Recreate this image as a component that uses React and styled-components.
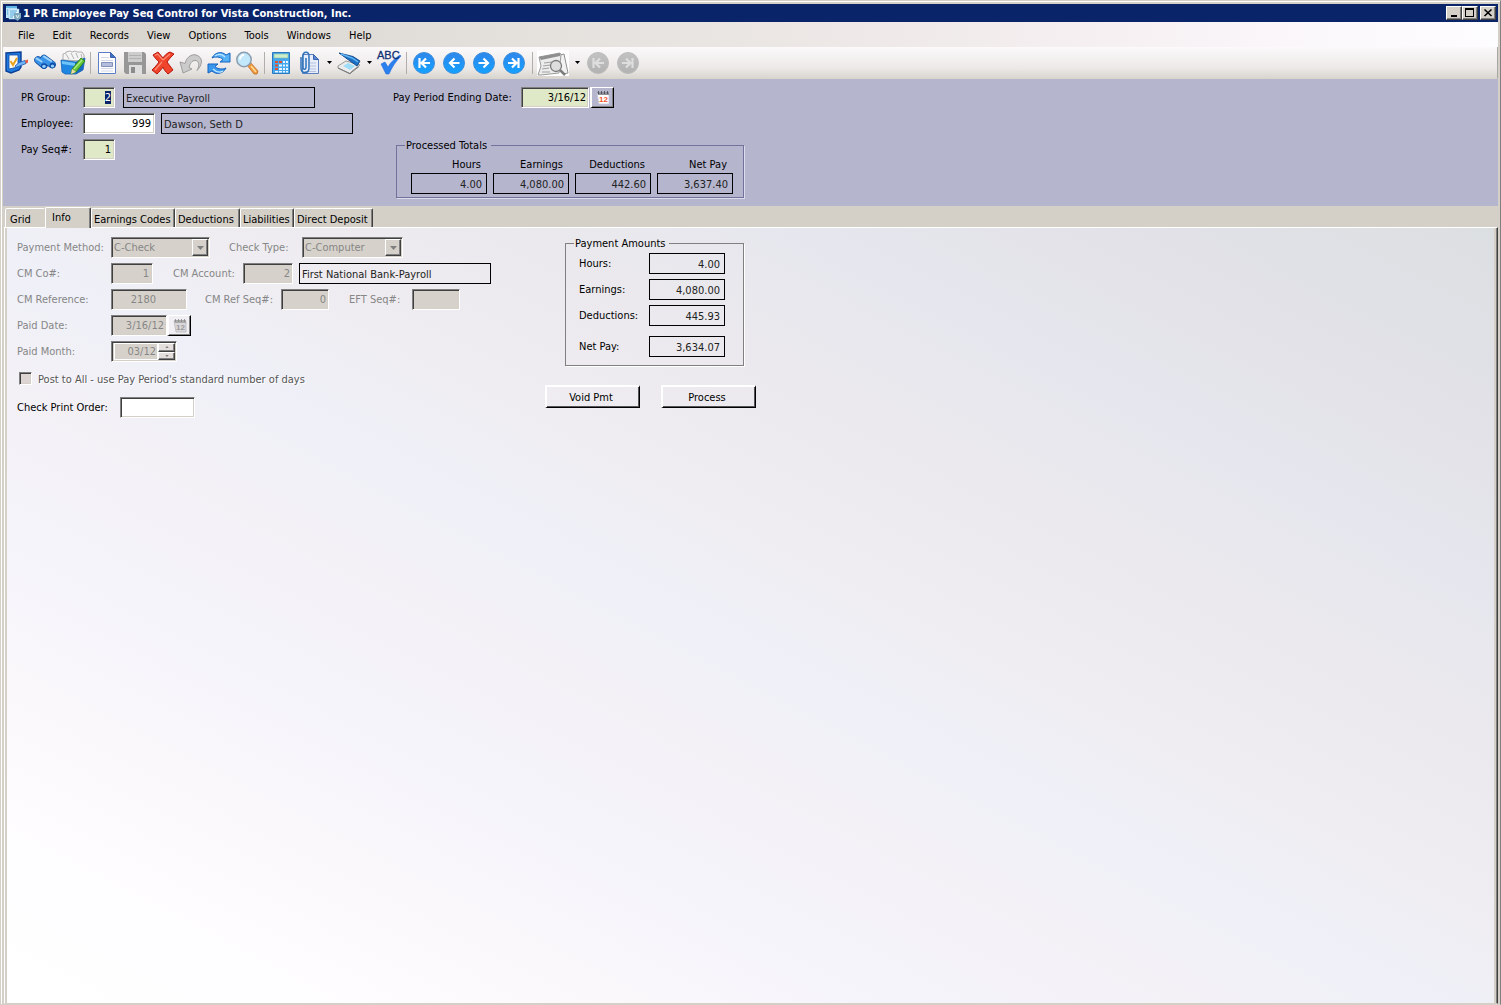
import React, { useEffect, useRef } from 'react'
import styled, { createGlobalStyle, css } from 'styled-components'

const GlobalStyle = createGlobalStyle`
  * { box-sizing: border-box; }
  body {
    margin: 0;
    background: #d4d0c8;
    color: #000;
  }
  body, input, select, button {
    font-family: "DejaVu Sans Condensed", "DejaVu Sans", Tahoma, sans-serif;
    font-size: 11px;
    line-height: 14px;
  }
`

const raised = css`
  border: 1px solid;
  border-color: #fff #404040 #404040 #fff;
  box-shadow: inset -1px -1px 0 #808080;
`

const sunken = css`
  border: 1px solid;
  border-color: #808080 #fff #fff #808080;
  box-shadow: inset 1px 1px 0 #404040, inset -1px -1px 0 #d4d0c8;
`

/* window frame */

const Window = styled.div`
  display: flex;
  flex-direction: column;
  min-height: 100vh;
  padding: 2px 2px 0;
  background: #d4d0c8;
  border: 1px solid;
  border-color: #d4d0c8 #808080 #d4d0c8 #d4d0c8;
  box-shadow: inset 1px 1px 0 #fff;
`

const TitleBar = styled.header`
  display: flex;
  align-items: center;
  height: 18px;
  margin-top: 1px;
  padding: 0 2px 0 3px;
  background: #0a246a;
  color: #fff;
`

const Title = styled.h1`
  flex: 1;
  margin: 0 0 0 2px;
  padding-top: 1px;
  font-size: 11px;
  font-weight: bold;
`

const CaptionButtons = styled.div`
  display: flex;
`

const CaptionButton = styled.button`
  ${raised}
  display: flex;
  width: 16px;
  height: 14px;
  margin-left: ${(p) => (p.$apart ? '2px' : '0')};
  padding: 1px 2px;
  background: #d4d0c8;
`

/* menu and toolbar */

const MenuBar = styled.nav`
  display: flex;
  align-items: center;
  gap: 18px;
  height: 25px;
  padding: 2px 15px 0;
  background: linear-gradient(to right, #d6d2cb, #e9e5e2 47%, #f6f0f2 75%, #fbf8fb 88%, #fdfcfe);
`

const MenuItem = styled.button`
  padding: 0;
  border: 0;
  background: none;
  color: #000;
`

const ToolBar = styled.div`
  display: flex;
  align-items: center;
  height: 32px;
  border-bottom: 1px solid #d9d4cc;
  border-right: 1px solid #a9a5a2;
  background: linear-gradient(#fbf9fa, #f1eded 50%, #ece8e6 70%, #d9d5cf);
`

const ToolButton = styled.button`
  display: flex;
  align-items: center;
  justify-content: center;
  width: ${(p) => p.$width || 28}px;
  height: 28px;
  padding: 0;
  border: 0;
  background: none;
`

const Separator = styled.span`
  width: 6px;
  height: 22px;
  background: linear-gradient(#b0adab, #b0adab) center / 1px 100% no-repeat;
`

const PreviewTile = styled.span`
  display: flex;
  justify-content: center;
  width: 32px;
  height: 26px;
  background: #fff;
`

/* fields */

const Row = styled.div`
  display: flex;
  align-items: center;
  min-height: 21px;
`

const Label = styled.label`
  flex: none;
  width: ${(p) => p.$width}px;
  margin-left: ${(p) => p.$gap || 0}px;
  padding-top: 1px;
  color: ${(p) => (p.$dim ? '#868686' : '#000')};
  white-space: nowrap;
`

const Field = styled.input`
  ${sunken}
  width: ${(p) => p.$width}px;
  height: 21px;
  padding: 0 ${(p) => p.$inset || 3}px 0 3px;
  border-radius: 0;
  outline: none;
  background: ${(p) => (p.$key ? '#dfe8c7' : '#fff')};
  color: #000;
  text-align: right;

  &:disabled {
    background: #d6d2cb;
    color: #868686;
  }
  &::selection {
    background: #0a246a;
    color: #fff;
  }
`

const Display = styled.input`
  width: ${(p) => p.$width || 76}px;
  height: 21px;
  margin-left: ${(p) => p.$gap || 0}px;
  padding: 1px ${(p) => (p.$text ? 2 : 4)}px 0;
  border: 1px solid #000;
  border-radius: 0;
  outline: none;
  background: transparent;
  color: #222;
  text-align: ${(p) => (p.$text ? 'left' : 'right')};
`

const DateButton = styled.button`
  ${raised}
  display: flex;
  align-items: center;
  justify-content: center;
  width: 24px;
  height: 21px;
  margin-left: ${(p) => p.$gap || 0}px;
  padding: 0;
  border-width: 1px 1px 1px 2px;
  border-color: #fff #000 #000 #fff;
  background: ${(p) => (p.disabled ? '#f1eff4' : '#b5b5ce')};
`

const ComboFrame = styled.div`
  ${sunken}
  display: flex;
  width: ${(p) => p.$width}px;
  height: 21px;
  padding: 1px;
  background: #d6d2cb;
`

const Select = styled.select`
  flex: 1;
  min-width: 0;
  padding: 1px 1px 0;
  border: 0;
  appearance: none;
  background: transparent;
  color: #868686;
  opacity: 1;
`

const ComboArrow = styled.span`
  ${raised}
  display: flex;
  align-items: center;
  justify-content: center;
  width: 16px;
`

const SpinFrame = styled.div`
  ${sunken}
  display: flex;
  width: 66px;
  height: 21px;
  padding: 1px 1px 1px 2px;
  background: #d6d2cb;
`

const SpinInput = styled.input`
  flex: 1;
  min-width: 0;
  padding: 1px 1px 0 0;
  border: 1px solid #fff;
  background: transparent;
  color: #868686;
  text-align: right;
`

const SpinButtons = styled.div`
  display: grid;
  grid-template-rows: 1fr 1fr;
  width: 17px;
`

const SpinButton = styled.button`
  ${raised}
  display: flex;
  align-items: center;
  justify-content: center;
  min-height: 0;
  padding: 0;
  background: #e4dedd;
`

const Group = styled.fieldset`
  width: ${(p) => p.$width}px;
  min-width: 0;
  margin: ${(p) => p.$margin};
  padding: ${(p) => p.$padding};
  border: 1px solid ${(p) => p.$line || '#808080'};
  box-shadow: 1px 1px 0 ${(p) => p.$light || '#fff'};
`

const Legend = styled.legend`
  height: 14px;
  margin-left: ${(p) => p.$gap}px;
  padding: 0 4px 0 1px;
  line-height: 16px;
`

/* record header */

const KeyPanel = styled.section`
  display: flex;
  padding: 8px 18px;
  background: #b5b5ce;
`

const Stack = styled.div`
  display: flex;
  flex-direction: column;
  gap: 5px;
  width: ${(p) => p.$width}px;
`

const Totals = styled.div`
  display: grid;
  grid-template-columns: repeat(4, 76px);
  gap: 1px 6px;
`

const TotalLabel = styled.label`
  padding-right: 6px;
  text-align: right;
`

/* tabs */

const TabStrip = styled.div`
  display: flex;
  align-items: flex-end;
  height: 21px;
  padding-left: 2px;
`

const Tab = styled.button`
  width: ${(p) => p.$width}px;
  height: 19px;
  padding: 3px 0 0 ${(p) => (p.$wide ? 5 : 2)}px;
  border: 1px solid;
  border-color: #fff #404040 transparent #fff;
  border-bottom: 0;
  border-radius: 2px 2px 0 0;
  box-shadow: inset -1px 0 0 #808080;
  background: #d4d0c8;
  color: #000;
  text-align: left;
  white-space: nowrap;

  ${(p) => p.$first && css`
    padding-left: 4px;
    border-right-color: transparent;
    box-shadow: none;
  `}
  ${(p) => p.$active && css`
    position: relative;
    height: 21px;
    margin-bottom: -1px;
    padding: 0 0 1px 6px;
  `}
`

const PageFrame = styled.div`
  display: flex;
  flex: 1;
  margin-left: 1px;
  padding-right: 1px;
  border: 1px solid;
  border-color: #fff #404040 #d4d0c8 #fff;
  box-shadow: inset -1px 0 0 #808080;
`

const TabPage = styled.main`
  display: flex;
  flex: 1;
  padding: 9px 10px;
  border: solid #d4d0c8;
  border-width: 0 2px;
  background: linear-gradient(
    to bottom left,
    #dcdfe2,
    #e2e2e8 14%,
    #e6e7ee 24%,
    #ebe9ed 34%,
    #efedf1 44%,
    #eff0f8 52%,
    #f3f1f6 60%,
    #f5f4fb 70%,
    #fbf8fb 80%,
    #fefdff 90%,
    #fff
  );
  background-clip: padding-box;
`

const CheckRow = styled.div`
  display: flex;
  align-items: center;
  gap: 6px;
  height: 16px;
  margin: 5px 0 4px;
  padding-left: 2px;
`

const CheckBox = styled.input`
  ${sunken}
  appearance: none;
  width: 13px;
  height: 13px;
  margin: 0 0 3px;
  background: #dcd5d3;
`

const CheckLabel = styled.label`
  color: #555;
  text-shadow: 1px 1px 0 #fff;
`

const NetPay = styled.div`
  margin-top: 5px;
`

const Actions = styled.div`
  display: flex;
  gap: 21px;
  margin-top: 19px;
`

const PushButton = styled.button`
  width: 95px;
  height: 23px;
  padding: 1px 4px 0 0;
  border: solid;
  border-width: 2px 1px 1px 2px;
  border-color: #fff #000 #000 #fff;
  box-shadow: inset -1px -1px 0 #55555a;
  background: transparent;
  color: #000;
`

/* icons */

const Icon = ({ children }) => (
  <svg width="24" height="24" viewBox="0 0 24 24" aria-hidden="true">
    {children}
  </svg>
)

const Caret = () => (
  <svg width="5" height="3" viewBox="0 0 5 3" aria-hidden="true">
    <path d="M0 0h5L2.500 3z" fill="#000" />
  </svg>
)

const AppIcon = () => (
  <svg width="15" height="16" viewBox="0 0 15 16" aria-hidden="true">
    <path d="M0 1h11v12H0z" fill="#bfe6fa" />
    <path d="M0 1h11v2H0z" fill="#5fb4e4" />
    <path d="M3 4h10v10H3z" fill="#e9f7ff" stroke="#8cc4e6" strokeWidth=".6" />
    <path d="M4 6h7M4 8h6M4 10h4M4 12h3M1 5h1M1 7h1M1 9h1" stroke="#3f9fd8" />
    <path d="M8 8h7v5l-3.500 3L8 13z" fill="#7da7bd" />
    <path d="M10 10l1.500 3L13 10" fill="none" stroke="#e6f2f8" />
  </svg>
)

const CloseFormIcon = () => (
  <Icon>
    <path d="M1 2l15-1v15l-2 3-8 3-5-2z" fill="#1f7be0" stroke="#0b3f94" strokeWidth="1.400" />
    <path d="M4 4h9v12l-9 2z" fill="#fffdf2" stroke="#0f4aa6" strokeWidth=".8" />
    <path d="M5.500 10l2.500 4 4-7" fill="none" stroke="#e8a21c" strokeWidth="2" />
    <path d="M10 15l4-3.500 6-2 1 3-5 2-5 2z" fill="#6fb4f6" stroke="#1658b4" strokeWidth=".8" />
    <path d="M20 9.500l3-1v3l-2 1z" fill="#ee5a3c" />
  </Icon>
)

const BinocularsIcon = () => (
  <Icon>
    <path d="M5 9l6 5M11 7.500l8 6" stroke="#14509f" strokeWidth="7.500" strokeLinecap="round" />
    <path d="M5 9l6 5M11 7.500l8 6" stroke="#3a93e6" strokeWidth="6" strokeLinecap="round" />
    <path d="M3.500 7.500l5 3M11 5.500l7 4.500" stroke="#9fd4fb" strokeWidth="2" strokeLinecap="round" />
    <ellipse cx="11" cy="15" rx="3" ry="2.800" fill="#0f4aa6" />
    <ellipse cx="11" cy="15.300" rx="1.800" ry="1.600" fill="#8fd0ff" />
    <ellipse cx="19.500" cy="14.500" rx="3" ry="2.800" fill="#0f4aa6" />
    <ellipse cx="19.500" cy="15" rx="1.800" ry="1.600" fill="#8fd0ff" />
  </Icon>
)

const FileBoxIcon = () => (
  <svg width="26" height="26" viewBox="0 0 26 26" aria-hidden="true">
    <path d="M3 10V4l3-1V2l4-1 2 1 3-1 2 1 5 0 2 3v6z" fill="#f4f4f4" stroke="#a0a0a0" strokeWidth=".8" />
    <path d="M6 4l3 5M11 3l3 6M16 3l2 5M21 4l1 4" stroke="#ababab" strokeWidth=".9" />
    <path d="M1 10l15 2v12l-11 0-3-2z" fill="#1f86e2" stroke="#1463b8" strokeWidth=".8" />
    <path d="M16 12l9-4-2 12-7 4z" fill="#1568c4" stroke="#1463b8" strokeWidth=".8" />
    <path d="M2 11l13 2v3L2 14z" fill="#6cc4fa" />
    <path d="M21 8l4 3-9 11-5 2 1-5z" fill="#63c636" stroke="#2f7d14" strokeWidth=".8" />
    <path d="M22 10l-8 9" stroke="#b4ec8c" strokeWidth="1.200" />
    <path d="M12 19l4 3-5 2z" fill="#f3d7a4" />
  </svg>
)

const NewIcon = () => (
  <Icon>
    <path d="M3.500 1.500h12l5 5v16h-17z" fill="#fdfdff" stroke="#5b7fc4" />
    <path d="M15.500 1.500v5h5z" fill="#3f6fc6" stroke="#3b62ae" />
    <path d="M6 6.500h8M6 9.500h12M6 17.500h12M6 20h12" stroke="#d4d7e6" />
    <path d="M6.500 11.500h11v4h-11z" fill="#b4bedc" stroke="#8190bc" />
  </Icon>
)

const SaveIcon = () => (
  <Icon>
    <path d="M1 1h20l2 2v20H3l-2-2z" fill="#979797" />
    <path d="M5 1h14v10H5z" fill="#cdcdcd" />
    <path d="M6 4.500h12M6 7.500h12" stroke="#b0b0b0" />
    <path d="M6 14h13v9H6z" fill="#dedede" />
    <path d="M8 16h4v6H8z" fill="#8b8b8b" />
  </Icon>
)

const DeleteIcon = () => (
  <Icon>
    <path
      d="M2 4l5-3c2 2 3 4 5 6 2-3 4-5 7-6l4 2c-3 3-5 5-7 8 2 3 4 5 6 8l-5 4c-2-2-4-4-5-7-2 3-4 5-6 7l-5-4c3-3 5-5 7-8-2-2-4-4-6-7z"
      fill="#f0452c"
      stroke="#b5170c"
    />
    <path d="M4 4.500l2.500-1.500L12 9l7-6M4 19l7-8" fill="none" stroke="#ff8d74" strokeWidth="1.200" />
  </Icon>
)

const UndoIcon = () => (
  <Icon>
    <path
      d="M1 11l3 11 9-4-3-1.500c1-4 3-7 6-7 4 0 5 4 2 10 5-5 6-11 2-14-5-4-12-1-14 7z"
      fill="#cbcbcb"
      stroke="#9d9d9d"
    />
  </Icon>
)

const RefreshIcon = () => (
  <Icon>
    <path d="M5 7c3-6 10-7 14-3l4-2v9H13l3-2.500c-3-3-8-3-11-1.500z" fill="#55b1f6" stroke="#1763bd" strokeWidth="1" />
    <path d="M19 17c-3 6-10 7-14 3l-4 2v-9h10l-3 2.500c3 3 8 3 11 1.500z" fill="#3a98ec" stroke="#1763bd" strokeWidth="1" />
    <path d="M8 5c3-2 7-2 10 1M16 20c-3 2-7 1-10-2" fill="none" stroke="#c4e8ff" strokeWidth="1.200" />
  </Icon>
)

const SearchIcon = () => (
  <Icon>
    <path d="M12 14l3-3 8 9-1 3h-3z" fill="#f0963a" stroke="#c2702a" strokeWidth=".8" />
    <path d="M16 15l5 6" stroke="#ffdf9c" strokeWidth="1.500" />
    <circle cx="9" cy="8.500" r="7.200" fill="#c2e8fb" stroke="#8d9dae" strokeWidth="1.500" />
    <path d="M5 8.500c0-3 2-4.500 4-4.500" fill="none" stroke="#fff" strokeWidth="2" />
  </Icon>
)

const CalculatorIcon = () => (
  <Icon>
    <path d="M3.500 1.500h17v21h-17z" fill="#45a8ee" stroke="#2a78c0" />
    <path d="M5 3h14v4H5z" fill="#cdeecb" stroke="#86b7a0" strokeWidth=".6" />
    <path d="M6 10h3v2H6zM6 13.500h3v2H6zM6 17h3v2H6z" fill="#e2512f" />
    <path d="M10 10h3v2h-3z" fill="#e2512f" />
    <path d="M10 13.500h3v2h-3zM10 17h3v2h-3zM6 20h3v1.500H6zM10 20h3v1.500h-3zM14 10h2v2h-2zM14 13.500h2v2h-2zM14 17h2v2h-2zM14 20h2v1.500h-2zM17 10h2v2h-2zM17 13.500h2v2h-2zM17 17h2v2h-2zM17 20h2v1.500h-2z" fill="#e9f6ff" />
  </Icon>
)

const AttachIcon = () => (
  <Icon>
    <path d="M5.500 3.500h11l5 5v14h-16z" fill="#e8edfb" stroke="#5b80c2" />
    <path d="M16.500 3.500v5h5z" fill="#5b8bd6" stroke="#3b66ae" />
    <path d="M13 12h6M13 15h6M13 18h6M8 20.500h11" stroke="#b4bfdc" />
    <path d="M4 6v11c0 6 8 6 8 0V5c0-5-6-5-6 0v11c0 3 3 3 3 0V7" fill="none" stroke="#2f74bc" strokeWidth="1.500" />
  </Icon>
)

const ScannerIcon = () => (
  <Icon>
    <path d="M1 15l8-5 14 4-8 6-2 3L1 17z" fill="#ececec" stroke="#8f8f8f" strokeWidth=".9" />
    <path d="M6 15l5-3 7 3-5 4z" fill="#9fdcf8" />
    <path d="M1 17l12 5.500 9-7" fill="none" stroke="#777" />
    <path d="M2 2l14 3.500 7 4.500-3 5z" fill="#1c6fc4" stroke="#0f4688" strokeWidth=".9" />
    <path d="M4 3l11 4 6 4" fill="none" stroke="#62b4f2" strokeWidth="1.500" />
  </Icon>
)

const SpellIcon = () => (
  <svg width="26" height="26" viewBox="0 0 26 26" aria-hidden="true">
    <path d="M5 14l4-2 3 5C14 13 18 9 24 5l1 1c-5 5-9 11-12 18h-3z" fill="#2a80ee" stroke="#2a6cd8" strokeWidth=".6" />
    <text x="1" y="9" fontSize="11" fontFamily="Liberation Sans, sans-serif" fill="#0f2f74" stroke="#0f2f74" strokeWidth=".3">ABC</text>
  </svg>
)

const arrows = {
  first: 'M6.500 6v10M17 11H9.500M13 6.500L8.500 11l4.500 4.500',
  prev: 'M16.500 11H7M11.500 6.500L7 11l4.500 4.500',
  next: 'M5.500 11H15M10.500 6.500L15 11l-4.500 4.500',
  last: 'M15.500 6v10M5 11h7.500M9 6.500l4.500 4.500L9 15.500',
}

const NavIcon = ({ to, off }) => (
  <svg width="22" height="22" viewBox="0 0 22 22" aria-hidden="true">
    <defs>
      <linearGradient id={`nav-${to}-${off ? 'off' : 'on'}`} x1="0" y1="0" x2="0" y2="1">
        <stop offset="0" stopColor={off ? '#c2c2c2' : '#2f86ea'} />
        <stop offset="1" stopColor={off ? '#b2b2b2' : '#14a2ff'} />
      </linearGradient>
    </defs>
    <circle cx="11" cy="11" r="10.500" fill={`url(#nav-${to}-${off ? 'off' : 'on'})`} stroke={off ? '#bcbcbc' : '#3c8fdc'} />
    <path d={arrows[to]} fill="none" stroke={off ? '#dedede' : '#fff'} strokeWidth="2.200" />
  </svg>
)

const PreviewIcon = () => (
  <svg width="32" height="26" viewBox="0 0 32 26" aria-hidden="true">
    <path d="M23 5l4-1 4 19-5 1" fill="#f2f2f2" stroke="#8f8f8f" />
    <path d="M2 7l21-4 1 2-2 18-18 2-3 0 3-9z" fill="#ececec" stroke="#9a9a9a" />
    <path d="M2 7l21-4v3L4 10z" fill="#8f8f8f" />
    <path d="M7 13l8-1M6 16l7-1M5 19l7-1M5 22h8" stroke="#a0a0a0" />
    <circle cx="19" cy="16" r="5.500" fill="#dedede" stroke="#7c7c7c" strokeWidth="1.300" />
    <path d="M23 20l5 5" stroke="#7c7c7c" strokeWidth="2.500" />
  </svg>
)

const CalendarIcon = ({ off }) => (
  <svg width="14" height="14" viewBox="0 0 14 14" aria-hidden="true">
    <path d="M1 2h12v11H3z" fill={off ? '#d9d7da' : '#fff'} stroke={off ? '#b9b7ba' : '#c5c5d8'} strokeWidth=".8" />
    <path d="M1 1h12v3H2z" fill={off ? '#aaa' : '#8d8f9c'} />
    <path d="M2.500 0v3M5.500 0v3M8.500 0v3M11.500 0v3" stroke={off ? '#888' : '#444'} strokeWidth=".8" />
    <text x="3" y="11" fontSize="8" fontWeight="bold" fontFamily="Liberation Sans, sans-serif" fill={off ? '#999' : '#f0522a'}>12</text>
  </svg>
)

const SmallArrow = ({ up, width = 7, height = 4 }) => (
  <svg width={width} height={height} viewBox="0 0 7 4" aria-hidden="true">
    <path d={up ? 'M0 4h7L3.500 0z' : 'M0 0h7L3.500 4z'} fill="#808080" />
  </svg>
)

const menus = ['File', 'Edit', 'Records', 'View', 'Options', 'Tools', 'Windows', 'Help']

const tabs = [
  { name: 'Grid', width: 40, first: true },
  { name: 'Info', width: 46, active: true },
  { name: 'Earnings Codes', width: 84 },
  { name: 'Deductions', width: 65 },
  { name: 'Liabilities', width: 54 },
  { name: 'Direct Deposit', width: 79 },
]

const processed = [
  ['Hours', '4.00'],
  ['Earnings', '4,080.00'],
  ['Deductions', '442.60'],
  ['Net Pay', '3,637.40'],
]

const Combo = ({ id, value, width }) => (
  <ComboFrame $width={width}>
    <Select id={id} disabled defaultValue={value}>
      <option>{value}</option>
    </Select>
    <ComboArrow><SmallArrow /></ComboArrow>
  </ComboFrame>
)

const Amount = ({ id, label, value }) => (
  <Row>
    <Label htmlFor={id} $width={70}>{label}</Label>
    <Display id={id} readOnly value={value} />
  </Row>
)

const Tools = () => (
  <ToolBar role="toolbar">
    <ToolButton aria-label="Close form"><CloseFormIcon /></ToolButton>
    <ToolButton aria-label="Find"><BinocularsIcon /></ToolButton>
    <ToolButton aria-label="Batch"><FileBoxIcon /></ToolButton>
    <Separator />
    <ToolButton aria-label="New"><NewIcon /></ToolButton>
    <ToolButton aria-label="Save"><SaveIcon /></ToolButton>
    <ToolButton aria-label="Delete"><DeleteIcon /></ToolButton>
    <ToolButton aria-label="Undo"><UndoIcon /></ToolButton>
    <ToolButton aria-label="Refresh"><RefreshIcon /></ToolButton>
    <ToolButton aria-label="Search"><SearchIcon /></ToolButton>
    <Separator />
    <ToolButton aria-label="Calculator"><CalculatorIcon /></ToolButton>
    <ToolButton aria-label="Attachments"><AttachIcon /></ToolButton>
    <ToolButton $width={12} aria-label="Attachment options"><Caret /></ToolButton>
    <ToolButton aria-label="Scan"><ScannerIcon /></ToolButton>
    <ToolButton $width={12} aria-label="Scan options"><Caret /></ToolButton>
    <ToolButton aria-label="Spelling"><SpellIcon /></ToolButton>
    <Separator />
    <ToolButton $width={30} aria-label="First record"><NavIcon to="first" /></ToolButton>
    <ToolButton $width={30} aria-label="Previous record"><NavIcon to="prev" /></ToolButton>
    <ToolButton $width={30} aria-label="Next record"><NavIcon to="next" /></ToolButton>
    <ToolButton $width={30} aria-label="Last record"><NavIcon to="last" /></ToolButton>
    <Separator />
    <ToolButton $width={36} aria-label="Preview"><PreviewTile><PreviewIcon /></PreviewTile></ToolButton>
    <ToolButton $width={12} aria-label="Preview options"><Caret /></ToolButton>
    <ToolButton $width={30} disabled aria-label="Back"><NavIcon to="first" off /></ToolButton>
    <ToolButton $width={30} disabled aria-label="Forward"><NavIcon to="last" off /></ToolButton>
  </ToolBar>
)

const RecordKeys = () => {
  const group = useRef(null)

  useEffect(() => {
    group.current.focus()
    group.current.select()
  }, [])

  return (
    <KeyPanel>
      <Stack $width={372}>
        <Row>
          <Label htmlFor="pr-group" $width={62}>PR Group:</Label>
          <Field id="pr-group" ref={group} $key $width={32} defaultValue="2" />
          <Display $text $width={192} $gap={8} readOnly value="Executive Payroll" aria-label="PR Group name" />
        </Row>
        <Row>
          <Label htmlFor="employee" $width={62}>Employee:</Label>
          <Field id="employee" $width={72} defaultValue="999" />
          <Display $text $width={192} $gap={6} readOnly value="Dawson, Seth D" aria-label="Employee name" />
        </Row>
        <Row>
          <Label htmlFor="pay-seq" $width={62}>Pay Seq#:</Label>
          <Field id="pay-seq" $key $width={32} defaultValue="1" />
        </Row>
      </Stack>
      <div>
        <Row>
          <Label htmlFor="period-end" $width={128}>Pay Period Ending Date:</Label>
          <Field id="period-end" $key $width={68} $inset={2} defaultValue="3/16/12" />
          <DateButton $gap={1} aria-label="Pick date"><CalendarIcon /></DateButton>
        </Row>
        <Group $width={348} $margin="30px 0 0 3px" $padding="6px 0 3px 14px" $line="#72729c" $light="#dcdcec">
          <Legend $gap={-6}>Processed Totals</Legend>
          <Totals>
            {processed.map(([name]) => (
              <TotalLabel key={name} htmlFor={`total-${name}`}>{name}</TotalLabel>
            ))}
            {processed.map(([name, value]) => (
              <Display key={name} id={`total-${name}`} readOnly value={value} />
            ))}
          </Totals>
        </Group>
      </div>
    </KeyPanel>
  )
}

const PaymentInfo = () => (
  <Stack $width={528}>
    <Row>
      <Label htmlFor="method" $width={94} $dim>Payment Method:</Label>
      <Combo id="method" width={99} value="C-Check" />
      <Label htmlFor="check-type" $width={73} $gap={19} $dim>Check Type:</Label>
      <Combo id="check-type" width={101} value="C-Computer" />
    </Row>
    <Row>
      <Label htmlFor="cm-co" $width={94} $dim>CM Co#:</Label>
      <Field id="cm-co" $width={42} disabled defaultValue="1" />
      <Label htmlFor="cm-account" $width={70} $gap={20} $dim>CM Account:</Label>
      <Field id="cm-account" $width={50} $inset={2} disabled defaultValue="2" />
      <Display $text $width={192} $gap={6} readOnly value="First National Bank-Payroll" aria-label="CM Account name" />
    </Row>
    <Row>
      <Label htmlFor="cm-ref" $width={94} $dim>CM Reference:</Label>
      <Field id="cm-ref" $width={76} $inset={30} disabled defaultValue="2180" />
      <Label htmlFor="cm-ref-seq" $width={76} $gap={18} $dim>CM Ref Seq#:</Label>
      <Field id="cm-ref-seq" $width={48} $inset={2} disabled defaultValue="0" />
      <Label htmlFor="eft-seq" $width={63} $gap={20} $dim>EFT Seq#:</Label>
      <Field id="eft-seq" $width={48} disabled />
    </Row>
    <Row>
      <Label htmlFor="paid-date" $width={94} $dim>Paid Date:</Label>
      <Field id="paid-date" $width={56} $inset={2} disabled defaultValue="3/16/12" />
      <DateButton disabled aria-label="Pick paid date"><CalendarIcon off /></DateButton>
    </Row>
    <Row>
      <Label htmlFor="paid-month" $width={94} $dim>Paid Month:</Label>
      <SpinFrame>
        <SpinInput id="paid-month" disabled defaultValue="03/12" />
        <SpinButtons>
          <SpinButton disabled aria-label="Next month"><SmallArrow up width={4} height={2} /></SpinButton>
          <SpinButton disabled aria-label="Previous month"><SmallArrow width={4} height={2} /></SpinButton>
        </SpinButtons>
      </SpinFrame>
    </Row>
    <CheckRow>
      <CheckBox id="post-all" type="checkbox" disabled />
      <CheckLabel htmlFor="post-all">Post to All - use Pay Period's standard number of days</CheckLabel>
    </CheckRow>
    <Row>
      <Label htmlFor="print-order" $width={103}>Check Print Order:</Label>
      <Field id="print-order" $width={75} />
    </Row>
  </Stack>
)

const PaymentAmounts = () => (
  <div>
    <Group $width={179} $margin="-1px 0 0 20px" $padding="3px 0 8px 13px">
      <Legend $gap={-5}>Payment Amounts</Legend>
      <Stack>
        <Amount id="amt-hours" label="Hours:" value="4.00" />
        <Amount id="amt-earnings" label="Earnings:" value="4,080.00" />
        <Amount id="amt-deductions" label="Deductions:" value="445.93" />
        <NetPay>
          <Amount id="amt-net" label="Net Pay:" value="3,634.07" />
        </NetPay>
      </Stack>
    </Group>
    <Actions>
      <PushButton>Void Pmt</PushButton>
      <PushButton>Process</PushButton>
    </Actions>
  </div>
)

const App = () => (
  <>
    <GlobalStyle />
    <Window>
      <TitleBar>
        <AppIcon />
        <Title>1 PR Employee Pay Seq Control for Vista Construction, Inc.</Title>
        <CaptionButtons>
          <CaptionButton aria-label="Minimize">
            <svg width="10" height="10" viewBox="0 0 10 10"><path d="M2 7h6v2H2z" /></svg>
          </CaptionButton>
          <CaptionButton aria-label="Maximize">
            <svg width="10" height="10" viewBox="0 0 10 10"><path d="M0 0h9v9H0zM1 2v6h7V2z" fillRule="evenodd" /></svg>
          </CaptionButton>
          <CaptionButton $apart aria-label="Close">
            <svg width="10" height="10" viewBox="0 0 10 10"><path d="M1.500 1.500l7 6.500M8.500 1.500l-7 6.500" stroke="#000" strokeWidth="1.600" /></svg>
          </CaptionButton>
        </CaptionButtons>
      </TitleBar>
      <MenuBar>
        {menus.map((name) => <MenuItem key={name}>{name}</MenuItem>)}
      </MenuBar>
      <Tools />
      <RecordKeys />
      <TabStrip role="tablist">
        {tabs.map((tab) => (
          <Tab key={tab.name} role="tab" aria-selected={!!tab.active} $width={tab.width} $active={tab.active} $first={tab.first}>
            {tab.name}
          </Tab>
        ))}
      </TabStrip>
      <PageFrame>
        <TabPage>
          <PaymentInfo />
          <PaymentAmounts />
        </TabPage>
      </PageFrame>
    </Window>
  </>
)

export default App
